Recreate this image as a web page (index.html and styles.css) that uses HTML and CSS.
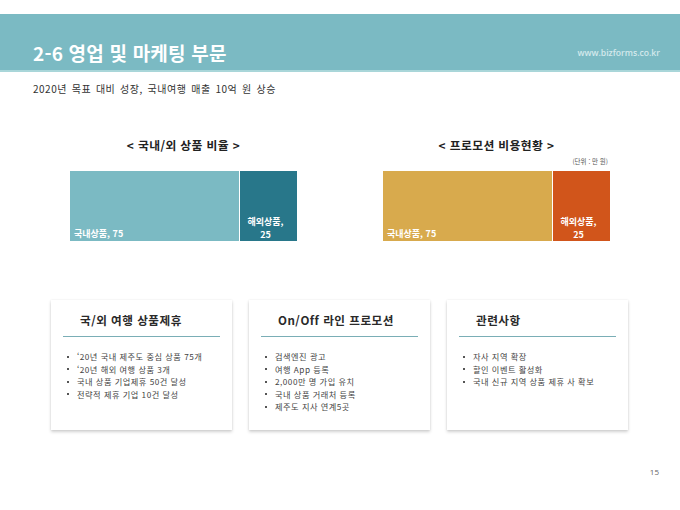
FILE: index.html
```html
<!DOCTYPE html>
<html lang="ko">
<head>
<meta charset="utf-8">
<link rel="stylesheet" href="styles.css">
</head>
<body>
<div class="page">
  <header class="header">
    <h1 class="title">2-6 영업 및 마케팅 부문</h1>
    <span class="site">www.bizforms.co.kr</span>
  </header>
  <p class="subtitle">2020년 목표 대비 성장, 국내여행 매출 10억 원 상승</p>

  <section class="charts">
    <div class="chart chart-left">
      <h2 class="chart-title">&lt; 국내/외 상품 비율 &gt;</h2>
      <div class="unit"></div>
      <div class="bar">
        <div class="seg seg-main teal-light"><span class="lbl-main">국내상품, 75</span></div>
        <div class="seg seg-side teal-dark"><span class="lbl-side">해외상품,<br>25</span></div>
      </div>
    </div>
    <div class="chart chart-right">
      <h2 class="chart-title">&lt; 프로모션 비용현황 &gt;</h2>
      <div class="unit">(단위 : 만 원)</div>
      <div class="bar">
        <div class="seg seg-main gold"><span class="lbl-main">국내상품, 75</span></div>
        <div class="seg seg-side orange"><span class="lbl-side">해외상품,<br>25</span></div>
      </div>
    </div>
  </section>

  <section class="cards">
    <div class="card">
      <h3 class="card-title">국/외 여행 상품제휴</h3>
      <ul class="list">
        <li>‘20년 국내 제주도 중심 상품 75개</li>
        <li>‘20년 해외 여행 상품 3개</li>
        <li>국내 상품 기업제휴 50건 달성</li>
        <li>전략적 제휴 기업 10건 달성</li>
      </ul>
    </div>
    <div class="card">
      <h3 class="card-title">On/Off 라인 프로모션</h3>
      <ul class="list">
        <li>검색엔진 광고</li>
        <li>여행 App 등록</li>
        <li>2,000만 명 가입 유치</li>
        <li>국내 상품 거래처 등록</li>
        <li>제주도 지사 연계5곳</li>
      </ul>
    </div>
    <div class="card">
      <h3 class="card-title">관련사항</h3>
      <ul class="list">
        <li>자사 지역 확장</li>
        <li>할인 이벤트 활성화</li>
        <li>국내 신규 지역 상품 제휴 사 확보</li>
      </ul>
    </div>
  </section>

  <footer class="footer"><span class="pageno">15</span></footer>
</div>
</body>
</html>
```

FILE: styles.css
```css
* { box-sizing: border-box; }
html, body { margin: 0; padding: 0; background: #ffffff; }
body {
  font-family: "Noto Sans CJK KR", "Noto Sans", sans-serif;
  color: #333;
}
.page {
  width: 680px;
  height: 510px;
  padding-top: 14px;
  display: flex;
  flex-direction: column;
}
.header {
  height: 58px;
  flex: none;
  background: #7bbac3;
  border-bottom: 2px solid #a9d6d9;
  display: flex;
  align-items: flex-end;
  justify-content: space-between;
  padding: 0 20px 4px 33px;
}
.title {
  margin: 0;
  font-size: 19px;
  font-weight: 700;
  color: #ffffff;
  line-height: 26px;
  letter-spacing: 0.2px;
}
.site {
  font-family: "Open Sans", "Noto Sans", sans-serif;
  font-size: 8.6px;
  font-weight: 600;
  color: #d3e9ec;
  line-height: 12px;
  margin-bottom: 7px;
}
.subtitle {
  margin: 10px 0 0 33px;
  font-size: 10px;
  line-height: 14px;
  color: #333;
  letter-spacing: 0.5px;
  word-spacing: 1.5px;
}
.charts {
  margin-top: 42px;
  display: flex;
  padding-left: 70px;
  gap: 86px;
}
.chart {
  width: 227px;
  display: flex;
  flex-direction: column;
}
.chart-title {
  margin: 0;
  text-align: center;
  font-size: 11.8px;
  font-weight: 700;
  line-height: 14px;
  color: #222;
  letter-spacing: 0.4px;
}
.unit {
  height: 11px;
  margin-top: 4px;
  margin-bottom: 4px;
  text-align: right;
  font-size: 6.5px;
  line-height: 11px;
  color: #555;
  padding-right: 2px;
}
.bar {
  display: flex;
  height: 70px;
}
.seg {
  display: flex;
  align-items: flex-end;
  color: #fff;
  font-size: 9px;
  font-weight: 700;
  line-height: 13px;
}
.seg-main {
  width: 170px;
  padding: 0 0 1px 4px;
  border-right: 1px solid #ffffff;
}
.seg-side {
  flex: 1;
  justify-content: center;
  text-align: center;
  padding: 0 6px 0 0;
}
.teal-light { background: #7bbac3; }
.teal-dark { background: #28778a; }
.gold { background: #d8aa4d; }
.orange { background: #d1551b; }

.cards {
  margin-top: 59px;
  display: flex;
  gap: 17px;
  padding-left: 51px;
}
.card {
  width: 181px;
  height: 130px;
  background: #fff;
  box-shadow: 0 2px 3px rgba(0,0,0,0.18), 0 0 2px rgba(0,0,0,0.08);
  padding: 10px 12px 0 12px;
}
.card-title {
  margin: 0;
  font-size: 11.6px;
  font-weight: 600;
  color: #2a2a2a;
  line-height: 20px;
  letter-spacing: 0.5px;
  padding: 0 0 6px 17px;
  border-bottom: 1px solid #7aaeb6;
}
.list {
  margin: 13px 0 0 0;
  padding: 0 0 0 4px;
  list-style: none;
}
.list li {
  font-size: 8.2px;
  line-height: 12.5px;
  color: #444;
  letter-spacing: 0.5px;
  position: relative;
  padding-left: 10px;
}
.list li::before {
  content: "";
  position: absolute;
  left: 0;
  top: 5.5px;
  width: 2px;
  height: 2px;
  background: #555;
}
.footer {
  margin-top: auto;
  display: flex;
  justify-content: flex-end;
  padding: 0 21px 32px 0;
}
.pageno {
  font-family: "Open Sans", sans-serif;
  font-size: 8px;
  color: #666;
  line-height: 12px;
}
```
